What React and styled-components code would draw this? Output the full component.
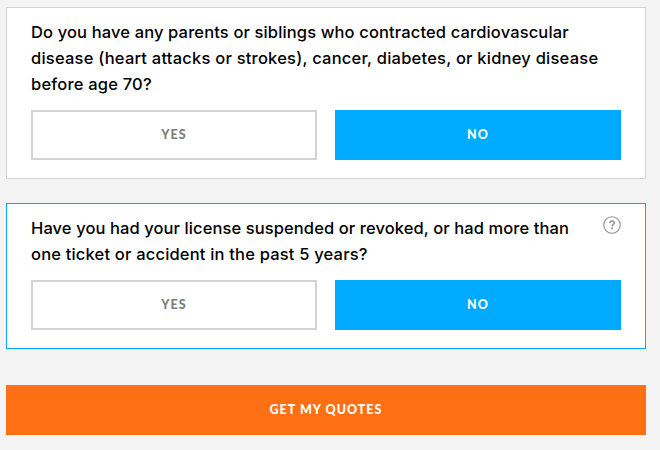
import { useState } from "react";
import styled, { createGlobalStyle } from "styled-components";

const questions = [
  {
    id: "family",
    lines: [
      { text: "Do you have any parents or siblings who contracted cardiovascular", spacing: 0.135 },
      { text: "disease (heart attacks or strokes), cancer, diabetes, or kidney disease", spacing: 0.225 },
      { text: "before age 70?", spacing: 0.2 },
    ],
  },
  {
    id: "license",
    active: true,
    help: true,
    lines: [
      { text: "Have you had your license suspended or revoked, or had more than", spacing: 0.095 },
      { text: "one ticket or accident in the past 5 years?", spacing: 0.185 },
    ],
  },
];

const HelpIcon = () => (
  <HelpButton type="button" aria-label="Help">
    <svg width="18" height="18" viewBox="0 0 18 18" fill="none" stroke="#8f8f8f">
      <circle cx="9" cy="9" r="8.2" strokeWidth="1.1" />
      <path d="M6.9 7.2C6.9 5.9 7.8 5.1 9 5.1s2.2.8 2.2 1.9c0 1.5-2.1 1.6-2.1 3.4" strokeWidth="1.5" />
      <path d="M9.1 11.6v1.6" strokeWidth="1.6" />
    </svg>
  </HelpButton>
);

const Question = ({ question }) => {
  const [answer, setAnswer] = useState("NO");

  return (
    <Card $active={question.active}>
      <Heading>
        <Title>
          {question.lines.map((line) => (
            <Line key={line.text} $spacing={line.spacing}>
              {line.text}
            </Line>
          ))}
        </Title>
        {question.help && <HelpIcon />}
      </Heading>
      <Answers>
        {["YES", "NO"].map((option) => (
          <Answer
            type="button"
            key={option}
            $selected={option === answer}
            onClick={() => setAnswer(option)}
          >
            {option}
          </Answer>
        ))}
      </Answers>
    </Card>
  );
};

const App = () => (
  <>
    <GlobalStyle />
    <Form onSubmit={(e) => e.preventDefault()}>
      {questions.map((question) => (
        <Question key={question.id} question={question} />
      ))}
      <Submit type="submit">GET MY QUOTES</Submit>
    </Form>
  </>
);

export default App;

const GlobalStyle = createGlobalStyle`
  * {
    box-sizing: border-box;
  }

  body {
    margin: 0;
    background-color: #f4f4f4;
    font-family: Inter, "Liberation Sans", sans-serif;
  }
`;

const Form = styled.form`
  display: flex;
  flex-direction: column;
  gap: 24px;
  width: 640px;
  margin: 0 0 0 6px;
  padding: 7px 0 15px;
`;

const Card = styled.section`
  padding: 11px 24px 18px;
  border: 1px solid ${({ $active }) => ($active ? "#00aaff" : "#d3d3d3")};
  background-color: #fff;
`;

const Heading = styled.div`
  display: flex;
  justify-content: space-between;
  align-items: flex-start;
  margin-bottom: 13px;
`;

const Title = styled.h2`
  margin: 0;
  color: #000;
  font-size: 16.5px;
  font-weight: 550;
  line-height: 26px;
`;

const Line = styled.span`
  display: block;
  white-space: nowrap;
  letter-spacing: ${({ $spacing }) => $spacing}px;
`;

const HelpButton = styled.button`
  display: flex;
  margin-top: 1px;
  padding: 0;
  border: none;
  background: none;
  cursor: pointer;
`;

const Answers = styled.div`
  display: grid;
  grid-template-columns: 1fr 1fr;
  gap: 18px;
`;

const BaseButton = styled.button`
  height: 50px;
  padding: 0 0 1px;
  border: none;
  color: #fff;
  font-family: Lato, "Liberation Sans", sans-serif;
  font-size: 12.5px;
  font-weight: 900;
  letter-spacing: 1px;
  cursor: pointer;
`;

const Answer = styled(BaseButton)`
  border: 2px solid ${({ $selected }) => ($selected ? "#00aaff" : "#d3d3d3")};
  background-color: ${({ $selected }) => ($selected ? "#00aaff" : "#fff")};
  color: ${({ $selected }) => ($selected ? "#fff" : "#7d7d7d")};
`;

const Submit = styled(BaseButton)`
  margin-top: 12px;
  background-color: #ff7014;
`;
